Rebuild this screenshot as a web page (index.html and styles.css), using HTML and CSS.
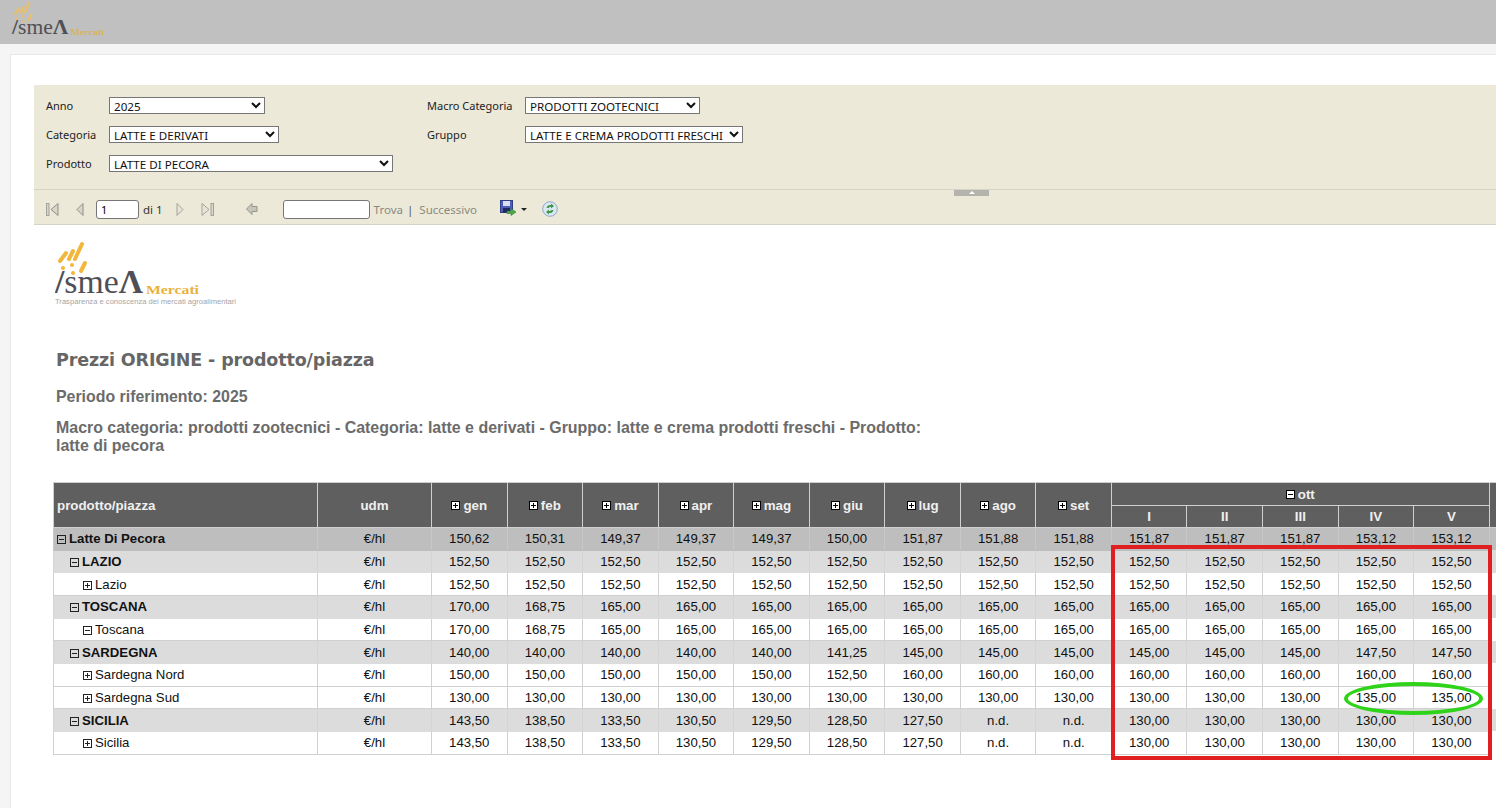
FILE: index.html
```html
<!DOCTYPE html>
<html lang="it">
<head>
    <meta charset="UTF-8">
    <meta name="viewport" content="width=device-width, initial-scale=1.0">
    <title>Prezzi ORIGINE - prodotto/piazza</title>
    <link rel="stylesheet" href="styles.css">
</head>
<body>
    <div class="top-bar">
        <svg class="logo-small" width="110" height="40" viewBox="0 0 110 40">
            <g transform="translate(12 1) scale(0.64)">
                <g class="rays rays-faded">
                    <line x1="27" y1="3" x2="20" y2="18"/>
                    <line x1="18" y1="10" x2="14" y2="18"/>
                    <line x1="11" y1="12" x2="5" y2="20"/>
                    <line x1="30" y1="22" x2="26" y2="30"/>
                    <line x1="8" y1="27" x2="8" y2="27"/>
                    <line x1="17" y1="24" x2="17" y2="24"/>
                    <line x1="18" y1="32" x2="18" y2="32"/>
                </g>
                <text class="logo-word" x="0" y="52" font-size="33" textLength="88" lengthAdjust="spacingAndGlyphs"><tspan font-weight="bold">/</tspan>sme<tspan font-weight="bold">Λ</tspan></text>
                <text class="logo-merc logo-merc-faded" x="91" y="53" font-size="13" textLength="53" lengthAdjust="spacingAndGlyphs">Mercati</text>
            </g>
        </svg>
    </div>

    <div class="page">
        <div class="report-viewer">
            <div class="params">
                <div class="param-col param-col-left">
                    <div class="param-row">
                        <label class="param-label">Anno</label>
                        <select class="sel sel-anno"><option>2025</option></select>
                    </div>
                    <div class="param-row">
                        <label class="param-label">Categoria</label>
                        <select class="sel sel-cat"><option>LATTE E DERIVATI</option></select>
                    </div>
                    <div class="param-row">
                        <label class="param-label">Prodotto</label>
                        <select class="sel sel-prod"><option>LATTE DI PECORA</option></select>
                    </div>
                </div>
                <div class="param-col">
                    <div class="param-row">
                        <label class="param-label param-label-wide">Macro Categoria</label>
                        <select class="sel sel-macro"><option>PRODOTTI ZOOTECNICI</option></select>
                    </div>
                    <div class="param-row">
                        <label class="param-label param-label-wide">Gruppo</label>
                        <select class="sel sel-gruppo"><option>LATTE E CREMA PRODOTTI FRESCHI</option></select>
                    </div>
                </div>
            </div>

            <div class="toolbar">
                <div class="collapse-tab"><span></span></div>
                <svg class="tb-icon tb-first" width="13" height="13" viewBox="0 0 13 13">
                    <rect x="0.5" y="0.5" width="2.5" height="12" fill="#d8d6ca" stroke="#a3a39a"/>
                    <path d="M12 0.5 L5 6.5 L12 12.5 Z" fill="#d8d6ca" stroke="#8f8f86"/>
                </svg>
                <svg class="tb-icon tb-prev" width="8" height="13" viewBox="0 0 8 13">
                    <path d="M7 0.5 L1 6.5 L7 12.5 Z" fill="#d8d6ca" stroke="#8f8f86"/>
                </svg>
                <input class="page-input" type="text" value="1">
                <span class="page-of">di 1</span>
                <svg class="tb-icon tb-next" width="8" height="13" viewBox="0 0 8 13">
                    <path d="M1 0.5 L7 6.5 L1 12.5 Z" fill="#e6e4d8" stroke="#a3a39a"/>
                </svg>
                <svg class="tb-icon tb-last" width="13" height="13" viewBox="0 0 13 13">
                    <path d="M1 0.5 L8 6.5 L1 12.5 Z" fill="#e6e4d8" stroke="#a3a39a"/>
                    <rect x="10" y="0.5" width="2.5" height="12" fill="#d8d6ca" stroke="#a3a39a"/>
                </svg>
                <svg class="tb-icon tb-back" width="12" height="12" viewBox="0 0 12 12">
                    <path d="M0.5 6 L6 0.5 V3.5 H11 V8.5 H6 V11.5 Z" fill="#c6c6ba" stroke="#95958b"/>
                </svg>
                <input class="find-input" type="text">
                <span class="find-link">Trova</span>
                <span class="find-sep">|</span>
                <span class="find-link">Successivo</span>
                <svg class="tb-icon tb-save" width="17" height="17" viewBox="0 0 17 17">
                    <rect x="0.5" y="0.5" width="12" height="12" fill="#4a5fb5" stroke="#323f85"/>
                    <rect x="3" y="1" width="7" height="5" fill="#d9def2"/>
                    <rect x="3" y="8" width="7" height="4.5" fill="#20295e"/>
                    <path d="M7 11 H11 V8.5 L16 12 L11 15.5 V13.5 H7 Z" fill="#4ea84a" stroke="#2f7a31" stroke-width="0.6"/>
                </svg>
                <span class="tb-caret"></span>
                <svg class="tb-icon tb-refresh" width="16" height="16" viewBox="0 0 16 16">
                    <circle cx="8" cy="8" r="7.3" fill="#dbe7f3" stroke="#8ea9c7"/>
                    <path d="M4.5 7 A4 4 0 0 1 9 4 V2.5 L12 5 L9 7.5 V6 A2.5 2.5 0 0 0 6.5 7 Z" fill="#3f9a45"/>
                    <path d="M11.5 9 A4 4 0 0 1 7 12 V13.5 L4 11 L7 8.5 V10 A2.5 2.5 0 0 0 9.5 9 Z" fill="#3f9a45"/>
                </svg>
            </div>

            <div class="report">
                <svg class="logo-big" width="190" height="72" viewBox="0 0 190 72">
                    <g class="rays">
                        <line x1="27" y1="3" x2="20" y2="18"/>
                        <line x1="18" y1="10" x2="14" y2="18"/>
                        <line x1="11" y1="12" x2="5" y2="20"/>
                        <line x1="30" y1="22" x2="26" y2="30"/>
                        <line x1="8" y1="27" x2="8" y2="27"/>
                        <line x1="17" y1="24" x2="17" y2="24"/>
                        <line x1="18" y1="32" x2="18" y2="32"/>
                    </g>
                    <text class="logo-word" x="0" y="52" font-size="33" textLength="88" lengthAdjust="spacingAndGlyphs"><tspan font-weight="bold">/</tspan>sme<tspan font-weight="bold">Λ</tspan></text>
                    <text class="logo-merc" x="91" y="53" font-size="13" textLength="53" lengthAdjust="spacingAndGlyphs">Mercati</text>
                    <text class="logo-tag" x="0" y="63" font-size="6.6" textLength="181" lengthAdjust="spacingAndGlyphs">Trasparenza e conoscenza dei mercati agroalimentari</text>
                </svg>

                <h1 class="report-title">Prezzi ORIGINE - prodotto/piazza</h1>
                <p class="report-period">Periodo riferimento: 2025</p>
                <p class="report-desc">Macro categoria: prodotti zootecnici - Categoria: latte e derivati - Gruppo: latte e crema prodotti freschi - Prodotto: latte di pecora</p>

                <div class="table-wrap">
                    <table class="prices">
                        <colgroup>
                            <col class="c-name"><col class="c-udm">
                            <col class="c-m"><col class="c-m"><col class="c-m"><col class="c-m"><col class="c-m"><col class="c-m"><col class="c-m"><col class="c-m"><col class="c-m">
                            <col class="c-m"><col class="c-m"><col class="c-m"><col class="c-m"><col class="c-m">
                            <col class="c-end">
                        </colgroup>
                        <thead>
                            <tr class="head-1">
                                <th rowspan="2" class="th-name">prodotto/piazza</th>
                                <th rowspan="2">udm</th>
                                <th rowspan="2"><i class="tog tog-plus"></i>gen</th>
                                <th rowspan="2"><i class="tog tog-plus"></i>feb</th>
                                <th rowspan="2"><i class="tog tog-plus"></i>mar</th>
                                <th rowspan="2"><i class="tog tog-plus"></i>apr</th>
                                <th rowspan="2"><i class="tog tog-plus"></i>mag</th>
                                <th rowspan="2"><i class="tog tog-plus"></i>giu</th>
                                <th rowspan="2"><i class="tog tog-plus"></i>lug</th>
                                <th rowspan="2"><i class="tog tog-plus"></i>ago</th>
                                <th rowspan="2"><i class="tog tog-plus"></i>set</th>
                                <th colspan="5"><i class="tog tog-minus"></i>ott</th>
                                <th rowspan="2"></th>
                            </tr>
                            <tr class="head-2">
                                <th>I</th><th>II</th><th>III</th><th>IV</th><th>V</th>
                            </tr>
                        </thead>
                        <tbody>
                            <tr class="r-total">
                                <td class="name"><i class="tree tree-minus"></i>Latte Di Pecora</td><td>€/hl</td>
                                <td>150,62</td><td>150,31</td><td>149,37</td><td>149,37</td><td>149,37</td><td>150,00</td><td>151,87</td><td>151,88</td><td>151,88</td>
                                <td>151,87</td><td>151,87</td><td>151,87</td><td>153,12</td><td>153,12</td><td class="end"></td>
                            </tr>
                            <tr class="r-region">
                                <td class="name lvl-1"><i class="tree tree-minus"></i>LAZIO</td><td>€/hl</td>
                                <td>152,50</td><td>152,50</td><td>152,50</td><td>152,50</td><td>152,50</td><td>152,50</td><td>152,50</td><td>152,50</td><td>152,50</td>
                                <td>152,50</td><td>152,50</td><td>152,50</td><td>152,50</td><td>152,50</td><td class="end"></td>
                            </tr>
                            <tr>
                                <td class="name lvl-2"><i class="tree tree-plus"></i>Lazio</td><td>€/hl</td>
                                <td>152,50</td><td>152,50</td><td>152,50</td><td>152,50</td><td>152,50</td><td>152,50</td><td>152,50</td><td>152,50</td><td>152,50</td>
                                <td>152,50</td><td>152,50</td><td>152,50</td><td>152,50</td><td>152,50</td><td class="end"></td>
                            </tr>
                            <tr class="r-region">
                                <td class="name lvl-1"><i class="tree tree-minus"></i>TOSCANA</td><td>€/hl</td>
                                <td>170,00</td><td>168,75</td><td>165,00</td><td>165,00</td><td>165,00</td><td>165,00</td><td>165,00</td><td>165,00</td><td>165,00</td>
                                <td>165,00</td><td>165,00</td><td>165,00</td><td>165,00</td><td>165,00</td><td class="end"></td>
                            </tr>
                            <tr>
                                <td class="name lvl-2"><i class="tree tree-minus"></i>Toscana</td><td>€/hl</td>
                                <td>170,00</td><td>168,75</td><td>165,00</td><td>165,00</td><td>165,00</td><td>165,00</td><td>165,00</td><td>165,00</td><td>165,00</td>
                                <td>165,00</td><td>165,00</td><td>165,00</td><td>165,00</td><td>165,00</td><td class="end"></td>
                            </tr>
                            <tr class="r-region">
                                <td class="name lvl-1"><i class="tree tree-minus"></i>SARDEGNA</td><td>€/hl</td>
                                <td>140,00</td><td>140,00</td><td>140,00</td><td>140,00</td><td>140,00</td><td>141,25</td><td>145,00</td><td>145,00</td><td>145,00</td>
                                <td>145,00</td><td>145,00</td><td>145,00</td><td>147,50</td><td>147,50</td><td class="end"></td>
                            </tr>
                            <tr>
                                <td class="name lvl-2"><i class="tree tree-plus"></i>Sardegna Nord</td><td>€/hl</td>
                                <td>150,00</td><td>150,00</td><td>150,00</td><td>150,00</td><td>150,00</td><td>152,50</td><td>160,00</td><td>160,00</td><td>160,00</td>
                                <td>160,00</td><td>160,00</td><td>160,00</td><td>160,00</td><td>160,00</td><td class="end"></td>
                            </tr>
                            <tr>
                                <td class="name lvl-2"><i class="tree tree-plus"></i>Sardegna Sud</td><td>€/hl</td>
                                <td>130,00</td><td>130,00</td><td>130,00</td><td>130,00</td><td>130,00</td><td>130,00</td><td>130,00</td><td>130,00</td><td>130,00</td>
                                <td>130,00</td><td>130,00</td><td>130,00</td><td>135,00</td><td>135,00</td><td class="end"></td>
                            </tr>
                            <tr class="r-region">
                                <td class="name lvl-1"><i class="tree tree-minus"></i>SICILIA</td><td>€/hl</td>
                                <td>143,50</td><td>138,50</td><td>133,50</td><td>130,50</td><td>129,50</td><td>128,50</td><td>127,50</td><td>n.d.</td><td>n.d.</td>
                                <td>130,00</td><td>130,00</td><td>130,00</td><td>130,00</td><td>130,00</td><td class="end"></td>
                            </tr>
                            <tr>
                                <td class="name lvl-2"><i class="tree tree-plus"></i>Sicilia</td><td>€/hl</td>
                                <td>143,50</td><td>138,50</td><td>133,50</td><td>130,50</td><td>129,50</td><td>128,50</td><td>127,50</td><td>n.d.</td><td>n.d.</td>
                                <td>130,00</td><td>130,00</td><td>130,00</td><td>130,00</td><td>130,00</td><td class="end"></td>
                            </tr>
                        </tbody>
                    </table>
                    <!-- segni a mano sopra la tabella -->
                    <div class="mark-red"></div>
                    <div class="mark-green"></div>
                </div>
            </div>
        </div>
    </div>
</body>
</html>
```

FILE: styles.css
```css
html, body {
    margin: 0;
    height: 808px;
    overflow: hidden;
}
body {
    background: #f5f5f5;
    font-family: "Noto Sans", Arial, sans-serif;
    font-size: 11px;
    color: #222;
}
.top-bar {
    height: 44px;
    background: #c0c0c0;
}
.logo-small {
    display: block;
}
.rays {
    stroke: #f2b63c;
    stroke-width: 4;
    stroke-linecap: round;
}
.rays-faded {
    stroke: #e6c070;
}
.logo-word {
    font-family: "Liberation Serif", serif;
    fill: #4f4f55;
}
.logo-merc {
    font-family: "Liberation Serif", serif;
    font-weight: bold;
    fill: #e9b23a;
}
.logo-merc-faded {
    fill: #d8b45a;
}
.logo-tag {
    font-family: "Liberation Sans", sans-serif;
    fill: #a6a6a6;
}
.page {
    margin: 10px 0 0 10px;
    height: 754px;
    background: white;
    border-top: 1px solid #e8e8e8;
    border-left: 1px solid #e8e8e8;
    padding: 30px 0 0 23px;
    box-sizing: border-box;
    overflow: hidden;
}
.report-viewer {
    width: 1480px;
}

/* parametri */
.params {
    height: 104px;
    box-sizing: border-box;
    background: #ece9d8;
    padding: 12px 0 0 12px;
    display: flex;
}
.param-col-left {
    width: 381px;
}
.param-row {
    display: flex;
    align-items: center;
    height: 17px;
    margin-bottom: 12px;
}
.param-label {
    width: 63px;
}
.param-label-wide {
    width: 98px;
}
.sel {
    height: 17px;
    padding: 0;
    font-family: "Noto Sans", Arial, sans-serif;
    font-size: 11.6px;
    background: white;
    color: #111;
    box-sizing: border-box;
}
.sel-anno { width: 156px; }
.sel-cat { width: 170px; }
.sel-prod { width: 284px; }
.sel-macro { width: 175px; }
.sel-gruppo { width: 218px; }

/* barra strumenti */
.toolbar {
    position: relative;
    height: 36px;
    box-sizing: border-box;
    padding-top: 4px;
    background: #ece9d8;
    border-top: 1px solid #d5d3c6;
    border-bottom: 1px solid #d5d3c6;
    display: flex;
    align-items: center;
    font-size: 11.5px;
    color: #333;
}
.collapse-tab {
    position: absolute;
    left: 920px;
    top: 0;
    width: 35px;
    height: 6px;
    background: #b4b4ac;
    display: flex;
    justify-content: center;
}
.collapse-tab span {
    margin-top: 1px;
    border-left: 3px solid transparent;
    border-right: 3px solid transparent;
    border-bottom: 3px solid white;
    height: 0;
}
.tb-icon {
    flex: none;
}
.tb-first { margin-left: 12px; }
.tb-prev { margin-left: 17px; }
.page-input {
    width: 43px;
    height: 19px;
    margin-left: 12px;
    padding: 0 0 0 4px;
    box-sizing: border-box;
    border: 1px solid #767676;
    border-radius: 3px;
    font: 11px "Noto Sans", Arial, sans-serif;
}
.page-of { margin-left: 4px; }
.tb-next { margin-left: 13px; }
.tb-last { margin-left: 17px; }
.tb-back { margin-left: 32px; }
.find-input {
    width: 87px;
    height: 19px;
    margin-left: 25px;
    box-sizing: border-box;
    border: 1px solid #767676;
    border-radius: 3px;
}
.find-link {
    color: #8a8a82;
}
.toolbar .find-input + .find-link { margin-left: 4px; }
.find-sep {
    margin: 0 6px 0 4px;
    color: #555;
}
.tb-save {
    margin-left: 23px;
    margin-top: -2px;
}
.tb-caret {
    margin-left: 4px;
    border-left: 3px solid transparent;
    border-right: 3px solid transparent;
    border-top: 3px solid #222;
}
.tb-refresh { margin-left: 15px; }

/* report */
.report {
    position: relative;
    padding: 16px 0 0 19px;
}
.logo-big {
    display: block;
    margin-left: 2px;
}
.report-title {
    margin: 36px 0 0 3px;
    font-family: "DejaVu Sans", Verdana, sans-serif;
    font-size: 17.5px;
    font-weight: bold;
    line-height: 22px;
    letter-spacing: -0.14px;
    color: #666;
}
.report-period {
    margin: 17px 0 0 3px;
    font-family: "Liberation Sans", Arial, sans-serif;
    font-size: 15.9px;
    font-weight: bold;
    line-height: 18px;
    color: #6b6b6b;
}
.report-desc {
    width: 880px;
    margin: 13px 0 0 3px;
    font-family: "Liberation Sans", Arial, sans-serif;
    font-size: 15.95px;
    font-weight: bold;
    line-height: 18px;
    color: #6b6b6b;
}

/* tabella */
.table-wrap {
    position: relative;
    margin-top: 27px;
}
.prices {
    table-layout: fixed;
    width: 1455.7px;
    border-collapse: collapse;
    font-family: "Liberation Sans", Arial, sans-serif;
    font-size: 13.2px;
    color: #111;
}
.c-name { width: 264px; }
.c-udm { width: 114px; }
.c-m { width: 75.55px; }
.c-end { width: 20px; }
.prices th {
    background: #5f5f5f;
    color: #f0f0f0;
    font-size: 13.33px;
    font-weight: bold;
    text-align: center;
    border: 1px solid #d0d0d0;
    padding: 0;
}
.prices .th-name {
    text-align: left;
    padding-left: 3px;
}
.head-1 { height: 23px; }
.head-2 { height: 22px; }
.prices tbody tr { height: 22.67px; }
.prices td {
    text-align: center;
    padding: 0;
    border-left: 1px solid #d0d0d0;
    border-right: 1px solid #d0d0d0;
    border-bottom: 1px solid #d0d0d0;
}
.prices td.name {
    text-align: left;
    padding-left: 3px;
}
.prices td.lvl-1 { padding-left: 16px; }
.prices td.lvl-2 { padding-left: 29px; }
.r-total td.name, .r-region td.name {
    font-weight: bold;
}
.r-total td {
    background: #bebebe;
    border-left-color: #c8c8c8;
    border-right-color: #c8c8c8;
    border-bottom-color: #bebebe;
}
.r-region td {
    background: #dcdcdc;
    border-left-color: #d4d4d4;
    border-right-color: #d4d4d4;
    border-bottom-color: #dcdcdc;
}
.prices td.end {
    border-right: none;
    border-bottom: none;
}
.tog {
    display: inline-block;
    position: relative;
    width: 7px;
    height: 7px;
    background: white;
    border: 1px solid black;
    margin-right: 3px;
    vertical-align: 0;
}
.tog::before {
    content: "";
    position: absolute;
    left: 1px;
    right: 1px;
    top: 3px;
    height: 1px;
    background: black;
}
.tog-plus::after {
    content: "";
    position: absolute;
    top: 1px;
    bottom: 1px;
    left: 3px;
    width: 1px;
    background: black;
}
.tree {
    display: inline-block;
    position: relative;
    width: 7px;
    height: 7px;
    border: 1px solid #222;
    margin-right: 3px;
    vertical-align: -1px;
}
.tree::before {
    content: "";
    position: absolute;
    left: 1px;
    right: 1px;
    top: 3px;
    height: 1px;
    background: #222;
}
.tree-plus::after {
    content: "";
    position: absolute;
    top: 1px;
    bottom: 1px;
    left: 3px;
    width: 1px;
    background: #222;
}

/* segni sopra la tabella */
.mark-red {
    position: absolute;
    left: 1058px;
    top: 63px;
    width: 381px;
    height: 215px;
    border: 4px solid #e02020;
    box-sizing: border-box;
}
.mark-green {
    position: absolute;
    left: 1291px;
    top: 200px;
    width: 139px;
    height: 33px;
    border: 4px solid #2fd41a;
    border-radius: 50%;
    box-sizing: border-box;
}
```
